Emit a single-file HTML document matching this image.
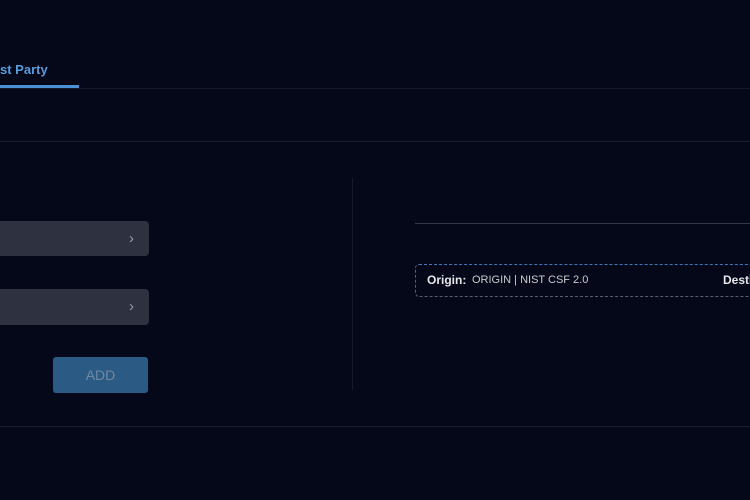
<!DOCTYPE html>
<html><head><style>
html,body{margin:0;padding:0}
body{width:750px;height:500px;background:#050819;overflow:hidden;font-family:"Liberation Sans",sans-serif}
#w{position:relative;width:750px;height:500px;overflow:hidden}
.a{position:absolute}
</style></head><body><div id="w">
<div class="a" style="left:0;top:62px;color:#5c9ad8;font-size:13px;font-weight:bold">st Party</div>
<div class="a" style="left:0;top:88px;width:750px;height:1px;background:#141a2a"></div>
<div class="a" style="left:0;top:85px;width:79px;height:3px;background:#4b8fd6"></div>
<div class="a" style="left:0;top:141px;width:750px;height:1px;background:#1a1f2e"></div>
<div class="a" style="left:352px;top:178px;width:1px;height:212px;background:#151a29"></div>
<div class="a" style="left:415px;top:223px;width:335px;height:1px;background:#34384a"></div>
<div class="a" style="left:0;top:426px;width:750px;height:1px;background:#1a1f2e"></div>
<div class="a" style="left:0;top:221px;width:149px;height:35px;background:#2e313f;border-radius:0 4px 4px 0"></div>
<div class="a" style="left:129px;top:230px;color:#9a9cab;font-size:15px">›</div>
<div class="a" style="left:0;top:289px;width:149px;height:36px;background:#2e313f;border-radius:0 4px 4px 0"></div>
<div class="a" style="left:129px;top:298px;color:#9a9cab;font-size:15px">›</div>
<div class="a" style="left:53px;top:357px;width:95px;height:36px;background:#2b5a85;border-radius:3px;color:#7189a3;font-size:14px;text-align:center;line-height:36px">ADD</div>
<div class="a" style="left:415px;top:264px;width:340px;height:31px;border:1px dashed #5a5e6e;border-top-color:#3f77b8;border-radius:4px"></div>
<div class="a" style="left:427px;top:273px;color:#e6e7ea;font-size:12px;font-weight:bold">Origin:</div>
<div class="a" style="left:472px;top:274px;color:#c9cbd2;font-size:11px">ORIGIN | NIST CSF 2.0</div>
<div class="a" style="left:723px;top:273px;color:#e6e7ea;font-size:12px;font-weight:bold;white-space:nowrap;width:27px;overflow:hidden">Destination:</div>
</div></body></html>
